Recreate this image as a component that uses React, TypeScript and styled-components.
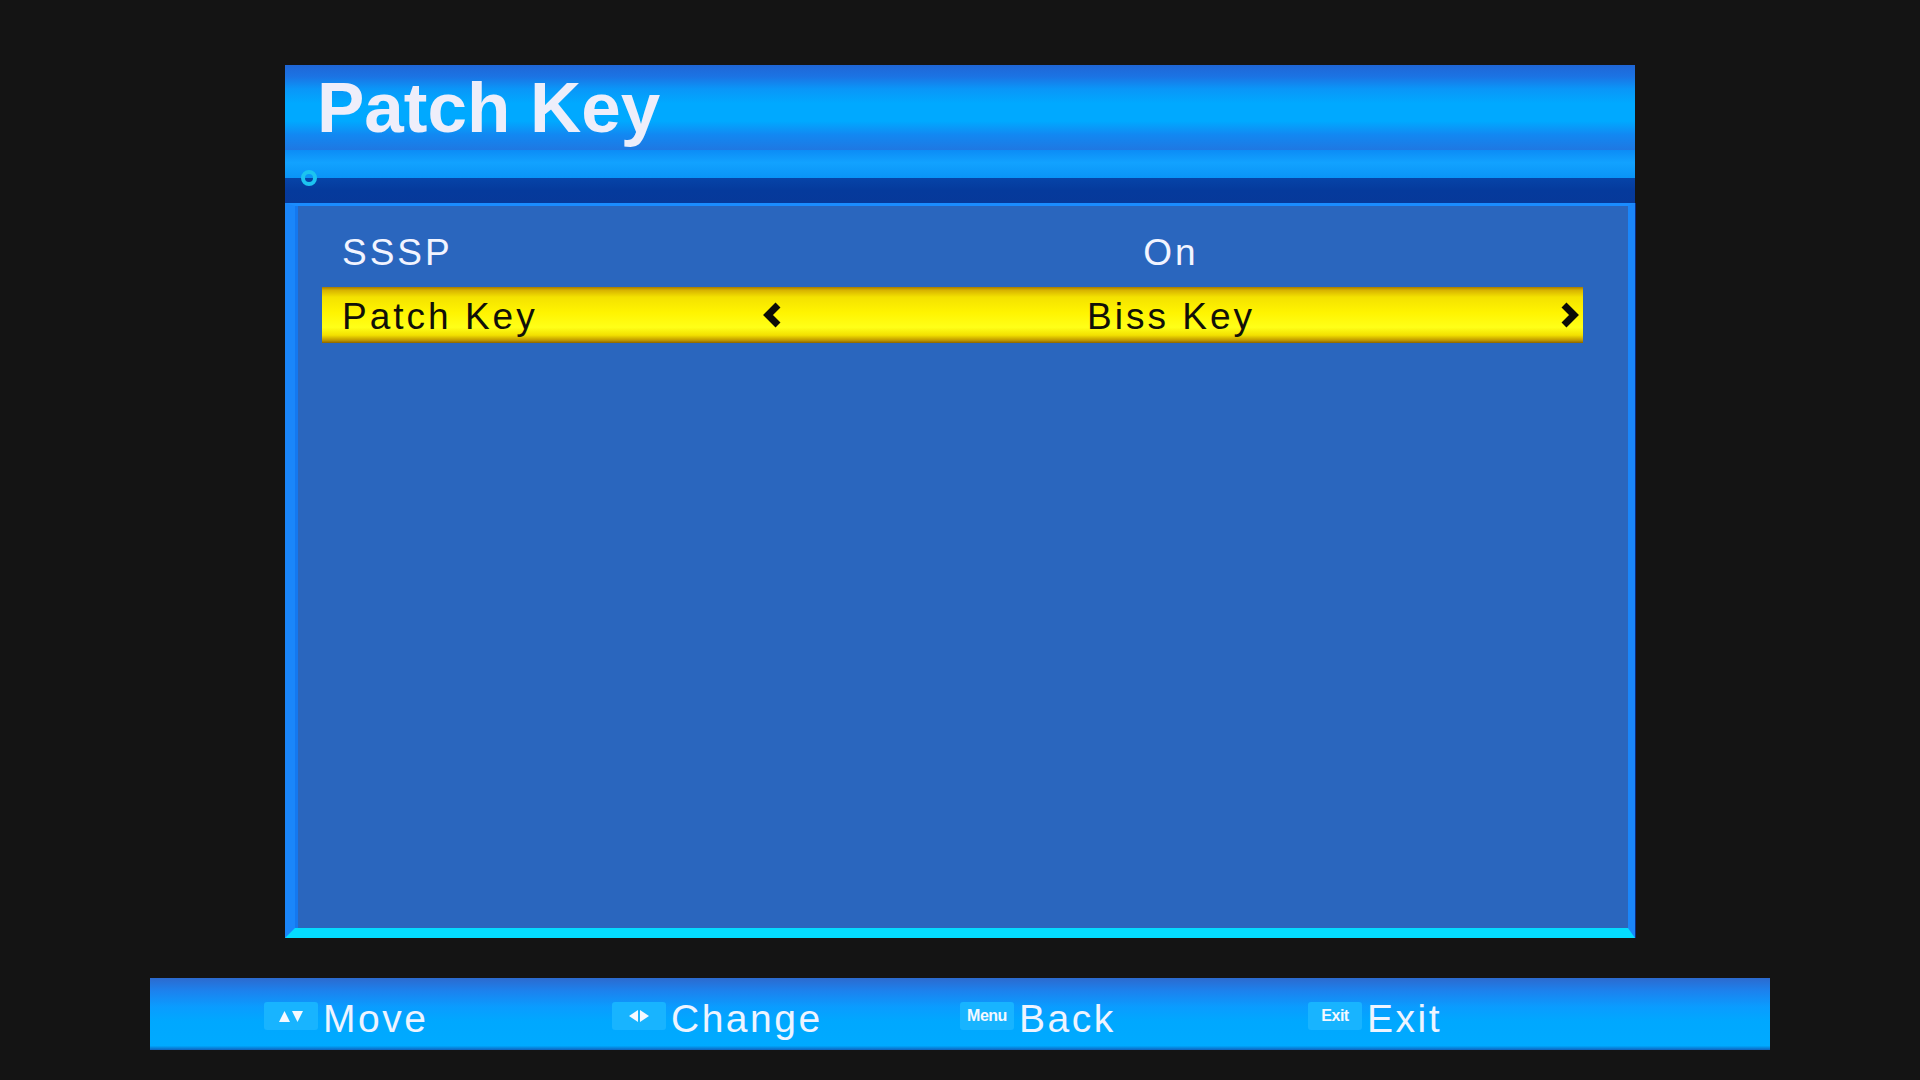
import React from "react";
import styled, { createGlobalStyle } from "styled-components";

const GlobalStyle = createGlobalStyle`
  html, body {
    margin: 0;
    padding: 0;
    background: #141414;
  }
  body {
    font-family: "Liberation Sans", Arial, sans-serif;
  }
`;

const Screen = styled.div`
  width: 1920px;
  height: 1080px;
  box-sizing: border-box;
  padding-top: 65px;
  display: flex;
  flex-direction: column;
  align-items: center;
  background: #141414;
  overflow: hidden;
`;

const Panel = styled.div`
  width: 1350px;
  display: flex;
  flex-direction: column;
`;

const TitleBar = styled.div`
  height: 85px;
  box-sizing: border-box;
  padding-left: 32px;
  display: flex;
  align-items: center;
  background: linear-gradient(
    to bottom,
    #1f66d6 0%,
    #1b74e4 14%,
    #0a96f8 28%,
    #00a9ff 45%,
    #00a9ff 66%,
    #1288f2 82%,
    #1f78e2 100%
  );
`;

const Title = styled.h1`
  margin: 0;
  font-size: 71px;
  font-weight: 700;
  line-height: 1;
  color: #eeeefa;
`;

const SubBar = styled.div`
  position: relative;
  display: flex;
  flex-direction: column;
`;

const SubBarLight = styled.div`
  height: 28px;
  background: linear-gradient(to bottom, #0c8cf6 0%, #12a2ff 45%, #0a94f6 100%);
`;

const SubBarDark = styled.div`
  height: 25px;
  background: linear-gradient(to bottom, #0644a8 0%, #053a9c 50%, #06399a 100%);
`;

/* little ring sitting on the seam of the strip */
const Ring = styled.span`
  position: absolute;
  left: 16px;
  top: 20px;
  width: 16px;
  height: 16px;
  box-sizing: border-box;
  border-radius: 50%;
  border: 4px solid #1cc4f0;
`;

const Content = styled.div`
  height: 735px;
  box-sizing: border-box;
  background: #2a66be;
  border-top: 3px solid #1a8cff;
  border-left: 10px solid #1a86fa;
  border-right: 7px solid #1a86fa;
  border-bottom: 10px solid #04dcff;
  box-shadow: inset 3px 0 0 #1478f0, 1px 0 0 #0a2a80;
  padding: 17px 45px 0 27px;
  display: flex;
  flex-direction: column;
  gap: 8px;
`;

const Row = styled.div<{ $selected?: boolean }>`
  height: 56px;
  box-sizing: border-box;
  padding: 0 4px 0 20px;
  display: flex;
  align-items: center;
  font-size: 37px;
  letter-spacing: 3px;
  color: ${({ $selected }) => ($selected ? "#111008" : "#f2f4ff")};
  background: ${({ $selected }) =>
    $selected
      ? `linear-gradient(
          to bottom,
          #a87c00 0%,
          #d8b400 6%,
          #f4e200 18%,
          #fff400 45%,
          #ffff18 72%,
          #f2e000 86%,
          #c09a00 95%,
          #8a6400 100%
        )`
      : "transparent"};
`;

const Label = styled.div`
  width: 421px;
  flex: none;
  padding-top: 4px;
`;

const ValueArea = styled.div`
  width: 816px;
  flex: none;
  display: flex;
  align-items: center;
  justify-content: space-between;
`;

const Value = styled.div`
  flex: 1;
  text-align: center;
  padding-top: 4px;
`;

const ArrowSlot = styled.div`
  width: 20px;
  height: 26px;
  flex: none;
  display: flex;
  align-items: center;
  justify-content: center;
`;

const Chevron = ({ dir }: { dir: "left" | "right" }) => (
  <svg width="20" height="26" viewBox="0 0 20 26">
    <polyline
      points={dir === "left" ? "15,3 5,13 15,23" : "5,3 15,13 5,23"}
      fill="none"
      stroke="#0c0c06"
      strokeWidth="7"
      strokeLinejoin="miter"
    />
  </svg>
);

const HelpBar = styled.div`
  margin-top: 40px;
  width: 1620px;
  height: 72px;
  box-sizing: border-box;
  padding-left: 114px;
  display: flex;
  align-items: center;
  background: linear-gradient(
    to bottom,
    #2c6ace 0%,
    #1c82ee 18%,
    #0a9cff 40%,
    #00a8ff 60%,
    #00aaff 94%,
    #0f62bc 100%
  );
`;

const HelpItem = styled.div`
  width: 348px;
  flex: none;
  display: flex;
  align-items: center;
  gap: 5px;
`;

const KeyBadge = styled.div`
  width: 54px;
  height: 28px;
  margin-top: 4px;
  border-radius: 3px;
  background: #18b4ff;
  display: flex;
  align-items: center;
  justify-content: center;
  color: #f4f8ff;
  font-size: 16px;
  font-weight: 700;
  letter-spacing: -0.5px;
`;

const HelpText = styled.span`
  font-size: 39px;
  letter-spacing: 2.5px;
  color: #eef4ff;
  padding-top: 8px;
  line-height: 1;
`;

const UpDownGlyph = () => (
  <svg width="26" height="14" viewBox="0 0 26 14">
    <polygon points="1,13 6.5,2 12,13" fill="#f6f9ff" />
    <polygon points="14,2 25,2 19.5,13" fill="#f6f9ff" />
  </svg>
);

const LeftRightGlyph = () => (
  <svg width="24" height="14" viewBox="0 0 24 14">
    <polygon points="11,1 11,13 2,7" fill="#f6f9ff" />
    <polygon points="13,1 13,13 22,7" fill="#f6f9ff" />
  </svg>
);

type Setting = { label: string; value: string; selected?: boolean };

const settings: Setting[] = [
  { label: "SSSP", value: "On" },
  { label: "Patch Key", value: "Biss Key", selected: true },
];

const App = () => {
  return (
    <>
      <GlobalStyle />
      <Screen>
        <Panel>
          <TitleBar>
            <Title>Patch Key</Title>
          </TitleBar>
          <SubBar>
            <SubBarLight />
            <SubBarDark />
            <Ring />
          </SubBar>
          <Content>
            {settings.map((s) => (
              <Row key={s.label} $selected={s.selected}>
                <Label>{s.label}</Label>
                <ValueArea>
                  <ArrowSlot>{s.selected && <Chevron dir="left" />}</ArrowSlot>
                  <Value>{s.value}</Value>
                  <ArrowSlot>{s.selected && <Chevron dir="right" />}</ArrowSlot>
                </ValueArea>
              </Row>
            ))}
          </Content>
        </Panel>

        <HelpBar>
          <HelpItem>
            <KeyBadge>
              <UpDownGlyph />
            </KeyBadge>
            <HelpText>Move</HelpText>
          </HelpItem>
          <HelpItem>
            <KeyBadge>
              <LeftRightGlyph />
            </KeyBadge>
            <HelpText>Change</HelpText>
          </HelpItem>
          <HelpItem>
            <KeyBadge>Menu</KeyBadge>
            <HelpText>Back</HelpText>
          </HelpItem>
          <HelpItem>
            <KeyBadge>Exit</KeyBadge>
            <HelpText>Exit</HelpText>
          </HelpItem>
        </HelpBar>
      </Screen>
    </>
  );
};

export default App;
